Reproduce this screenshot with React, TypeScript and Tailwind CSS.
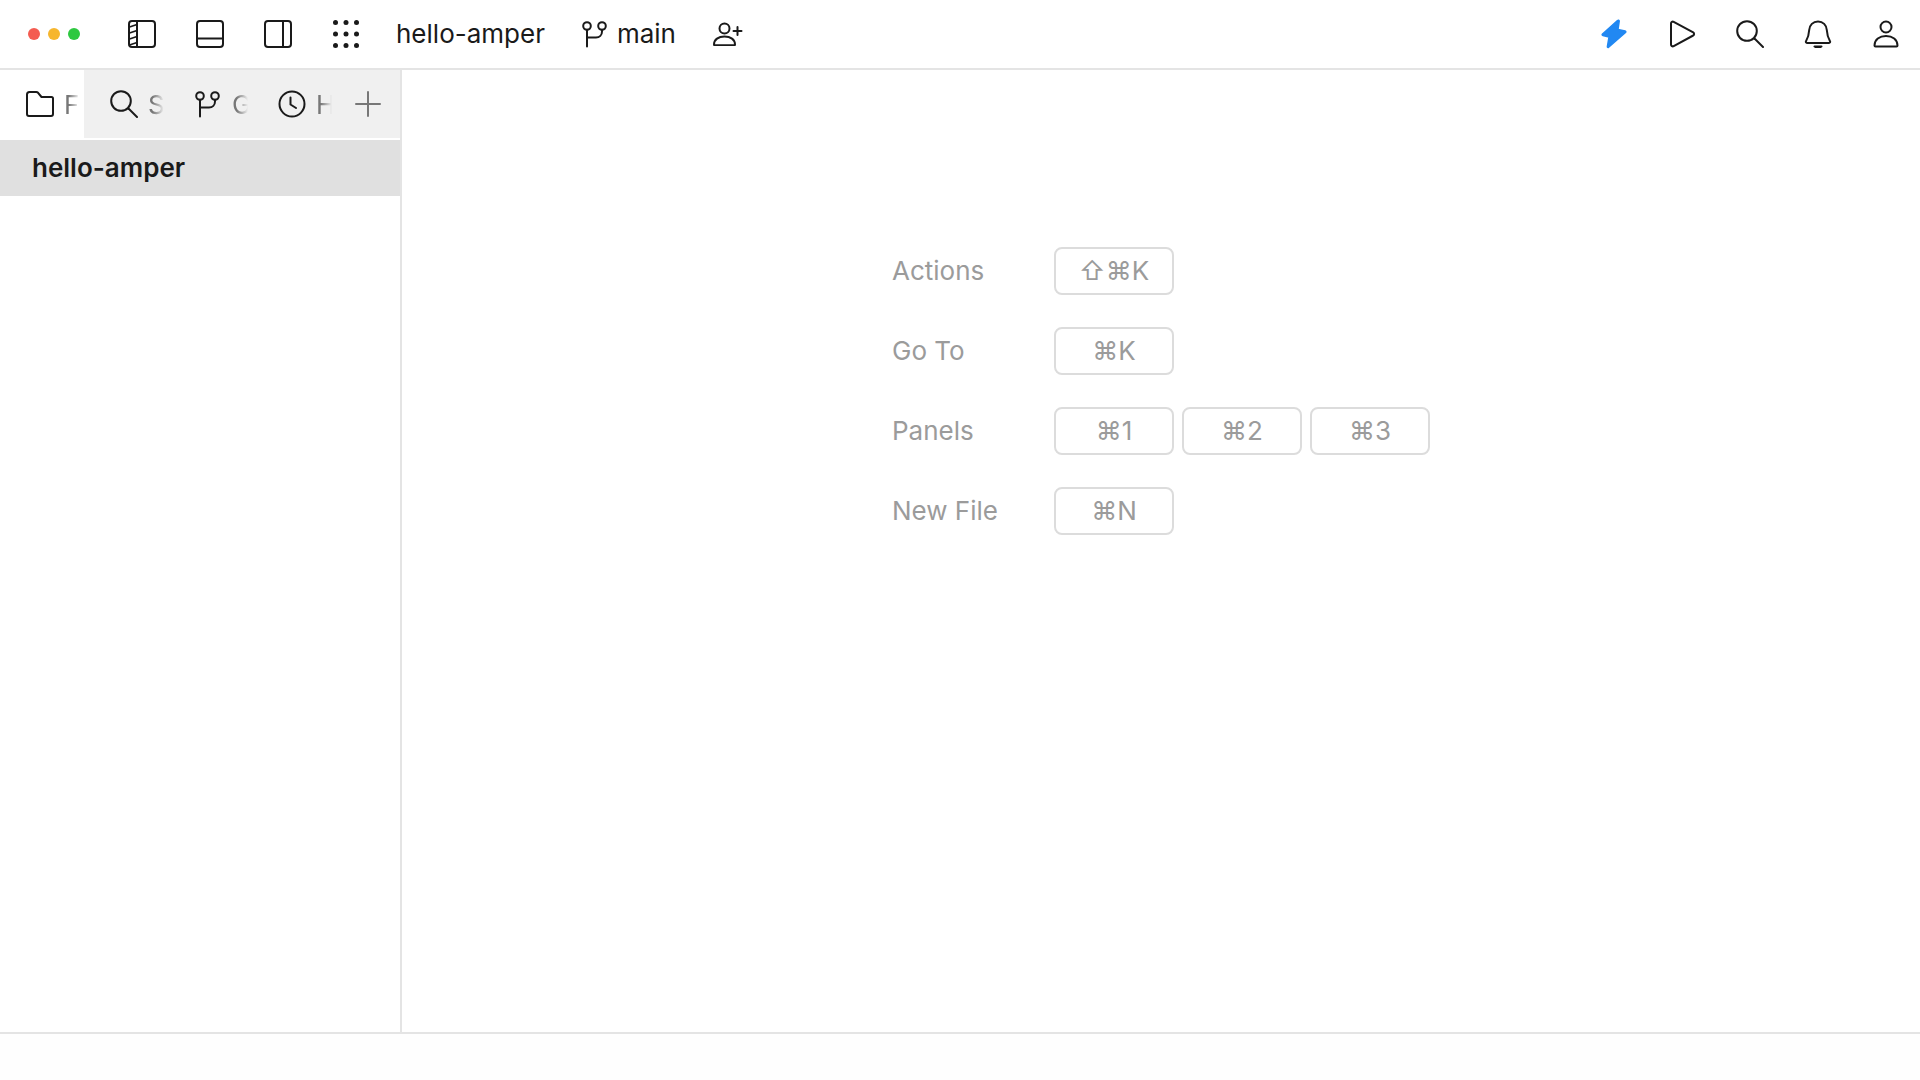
import type { ReactNode } from "react";

const stroke = {
  fill: "none",
  stroke: "currentColor",
  strokeWidth: 2,
  strokeLinecap: "round" as const,
  strokeLinejoin: "round" as const,
};

function Icon({ children, size = 28 }: { children: ReactNode; size?: number }) {
  return (
    <svg width={size} height={size} viewBox="0 0 28 28" {...stroke} className="shrink-0">
      {children}
    </svg>
  );
}

const SidebarLeft = () => (
  <Icon>
    <rect x="1" y="1" width="26" height="26" rx="3" />
    <path d="M9 1v26" />
    <path d="M1.500 7 9 4.500M1.500 13 9 10.500M1.500 19 9 16.500M1.500 25 9 22.500" strokeWidth="1.600" />
  </Icon>
);
const PanelBottom = () => (
  <Icon>
    <rect x="1" y="1" width="26" height="26" rx="3" />
    <path d="M1 18.500h26" />
  </Icon>
);
const SidebarRight = () => (
  <Icon>
    <rect x="1" y="1" width="26" height="26" rx="3" />
    <path d="M19 1v26" />
  </Icon>
);
const Grid = () => (
  <Icon>
    {[2.500, 14, 25.500].map((y) =>
      [3.500, 14, 24.500].map((x) => (
        <circle key={`${x}-${y}`} cx={x} cy={y} r="2.500" fill="currentColor" stroke="none" />
      )),
    )}
  </Icon>
);
const Branch = () => (
  <Icon>
    <circle cx="6" cy="6" r="3.800" />
    <circle cx="21" cy="6" r="3.800" />
    <path d="M6 9.800V26.500" />
    <path d="M21 9.800v1.700c0 3.500-2.500 6-6 6H6" />
  </Icon>
);
const AddUser = () => (
  <svg width="30" height="24" viewBox="0 0 30 24" {...stroke} className="shrink-0">
    <circle cx="11.500" cy="6.500" r="5" />
    <path d="M1 22.500c0-5 4.500-8 10.500-8s10.500 3 10.500 8c0 .4-.3.7-.7.7H1.700c-.4 0-.7-.3-.7-.7Z" />
    <path d="M24.500 5v8M20.500 9h8" />
  </svg>
);
const Bolt = () => (
  <svg width="28" height="32" viewBox="0 0 28 32" className="shrink-0">
    <path
      d="M17.500 2.500 2.500 16c-.6.600-.4 1.300.4 1.500l6.100 1.500-1.600 9.500c-.1.900.6 1.200 1.200.6L25.500 14.500c.6-.6.400-1.300-.4-1.500L18 11.500l1.200-8.300c.1-.9-1-1.300-1.700-.7Z"
      fill="#2188f2"
      stroke="#2188f2"
      strokeWidth="1.500"
      strokeLinejoin="round"
    />
  </svg>
);
const Play = () => (
  <Icon>
    <path d="M3 3.500c0-1.500 1.400-2.300 2.700-1.600l19.500 10.500c1.200.7 1.200 2.400 0 3.100L5.700 26.100C4.400 26.800 3 26 3 24.500Z" />
  </Icon>
);
const Search = () => (
  <Icon>
    <circle cx="11" cy="11" r="9.800" />
    <path d="m18.500 18.500 8.500 8.500" />
  </Icon>
);
const Bell = () => (
  <Icon>
    <path d="M14 1.500c-5 0-8.500 3.500-8.800 8.500-.3 5-1.200 8-3.200 11.200-.5.800 0 1.800 1 1.800h22c1 0 1.500-1 1-1.800-2-3.200-2.900-6.200-3.200-11.200-.3-5-3.800-8.500-8.800-8.500Z" />
    <path d="M10.500 26.500h7L14 28.500Z" fill="currentColor" />
  </Icon>
);
const User = () => (
  <Icon>
    <circle cx="14" cy="7" r="5.500" />
    <path d="M2.500 25.500c0-6 5-9.500 11.500-9.500s11.500 3.500 11.500 9.500c0 .6-.4 1-1 1h-21c-.6 0-1-.4-1-1Z" />
  </Icon>
);
const Folder = () => (
  <Icon>
    <path d="M1 4.500C1 3.100 2 2 3.500 2h6.800c.7 0 1.300.3 1.800.8L15.500 7h10c.9 0 1.500.7 1.500 1.500V24c0 1.100-.9 2-2 2H3c-1.100 0-2-.9-2-2Z" />
  </Icon>
);
const Clock = () => (
  <Icon>
    <circle cx="14" cy="14" r="12.500" />
    <path d="M12.500 7.500v7l5.500 3.500" />
  </Icon>
);

function BarButton({ children }: { children: ReactNode }) {
  return <div className="flex h-full w-[68px] items-center justify-center">{children}</div>;
}

function Tab({ icon, label }: { icon: ReactNode; label: string }) {
  return (
    <div className="flex h-full w-[84px] shrink-0 items-center gap-[10px] overflow-hidden pl-[26px]">
      {icon}
      <span className="w-[16px] shrink-0 overflow-hidden text-[26px] text-[#777] [mask-image:linear-gradient(to_right,#000_30%,transparent_100%)]">
        {label}
      </span>
    </div>
  );
}

const shortcuts = [
  { label: "Actions", keys: ["⇧⌘K"] },
  { label: "Go To", keys: ["⌘K"] },
  { label: "Panels", keys: ["⌘1", "⌘2", "⌘3"] },
  { label: "New File", keys: ["⌘N"] },
];

export default function App() {
  return (
    <div className="flex h-[1080px] w-[1920px] flex-col overflow-hidden bg-white font-['Inter','DejaVu_Sans',sans-serif] text-[#1a1a1a]">
      <header className="flex h-[70px] shrink-0 items-center border-b-2 border-[#e4e4e4]">
        <div className="flex w-[108px] shrink-0 items-center gap-2 pl-[28px]">
          <span className="size-3 rounded-full bg-[#f45c51]" />
          <span className="size-3 rounded-full bg-[#f6b62e]" />
          <span className="size-3 rounded-full bg-[#2ec840]" />
        </div>
        <BarButton><SidebarLeft /></BarButton>
        <BarButton><PanelBottom /></BarButton>
        <BarButton><SidebarRight /></BarButton>
        <BarButton><Grid /></BarButton>
        <span className="ml-[16px] pb-[2px] text-[26px]">hello-amper</span>
        <div className="ml-[36px] flex items-center gap-2">
          <Branch />
          <span className="pb-[2px] text-[26px]">main</span>
        </div>
        <div className="ml-[37px]"><AddUser /></div>
        <div className="ml-auto flex h-full">
          <BarButton><Bolt /></BarButton>
          <BarButton><Play /></BarButton>
          <BarButton><Search /></BarButton>
          <BarButton><Bell /></BarButton>
          <BarButton><User /></BarButton>
        </div>
      </header>

      <div className="flex min-h-0 flex-1">
        <aside className="w-[402px] shrink-0 border-r-2 border-[#e4e4e4]">
          <div className="flex h-[68px] bg-[#f0f0f0]">
            <div className="bg-white"><Tab icon={<Folder />} label="Files" /></div>
            <Tab icon={<Search />} label="Search" />
            <Tab icon={<Branch />} label="Git" />
            <Tab icon={<Clock />} label="History" />
            <div className="flex flex-1 items-center justify-center text-[#777]">
              <Icon><path d="M14 2v24M2 14h24" /></Icon>
            </div>
          </div>
          <div className="mt-[2px] flex h-[56px] items-center bg-[#e0e0e0] pb-[2px] pl-8 text-[26px] font-semibold">
            hello-amper
          </div>
        </aside>

        <main className="flex-1 pl-[490px] pt-[177px]">
          <div className="flex flex-col gap-8">
            {shortcuts.map((row) => (
              <div key={row.label} className="flex items-center">
                <span className="w-[162px] pb-[2px] text-[26px] text-[#9b9b9b]">{row.label}</span>
                <div className="flex gap-2">
                  {row.keys.map((key) => (
                    <kbd
                      key={key}
                      className="flex h-[48px] w-[120px] items-center justify-center rounded-lg border-2 border-[#dcdcdc] pb-[2px] font-['Inter','DejaVu_Sans',sans-serif] text-[26px] text-[#9b9b9b]"
                    >
                      {key}
                    </kbd>
                  ))}
                </div>
              </div>
            ))}
          </div>
        </main>
      </div>

      <footer className="h-[48px] shrink-0 border-t-2 border-[#e4e4e4] bg-[#fefefe]" />
    </div>
  );
}
